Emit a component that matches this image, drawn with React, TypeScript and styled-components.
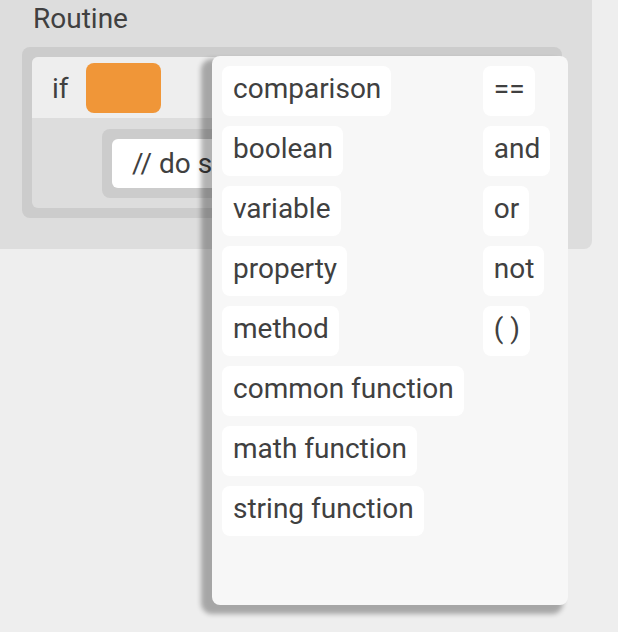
import React from "react";
import styled, { createGlobalStyle } from "styled-components";

const GlobalStyle = createGlobalStyle`
  html, body {
    margin: 0;
    padding: 0;
    background: #eeeeee;
    font-family: Roboto, "Liberation Sans", Arial, sans-serif;
    color: #404040;
  }
  * { box-sizing: border-box; }
`;

const Page = styled.div`
  position: relative;
  width: 618px;
  height: 632px;
  overflow: hidden;
`;

const Panel = styled.div`
  width: 592px;
  background: #dddddd;
  border-bottom-right-radius: 8px;
  padding: 2px 30px 31px 22px;
`;

const Title = styled.div`
  font-size: 28px;
  line-height: 33px;
  padding-left: 11px;
  margin-bottom: 12px;
`;

const Block = styled.div`
  background: #cccccc;
  border-radius: 8px;
  padding: 10px;
`;

const IfBlock = styled.div`
  background: #dddddd;
  border-radius: 6px;
  overflow: hidden;
`;

const IfHeader = styled.div`
  display: flex;
  align-items: center;
  gap: 17px;
  background: #eeeeee;
  padding: 6px 20px 5px;
  font-size: 28px;
  line-height: 33px;
`;

const Slot = styled.div`
  width: 75px;
  height: 50px;
  background: #f09638;
  border-radius: 8px;
`;

const IfBody = styled.div`
  display: flex;
  padding: 11px 0 10px 70px;
`;

const Comment = styled.div`
  background: #ffffff;
  border-radius: 6px;
  padding: 8px 20px;
  font-size: 28px;
  line-height: 33px;
  white-space: nowrap;
`;

const Popup = styled.div`
  position: absolute;
  left: 212px;
  top: 56px;
  width: 356px;
  height: 549px;
  background: #f7f7f7;
  border-radius: 8px;
  box-shadow: -8px 6px 5px 3px rgba(0, 0, 0, 0.3);
  padding: 10px;
  display: flex;
  gap: 19px;
`;

const Column = styled.div`
  display: flex;
  flex-direction: column;
  align-items: flex-start;
  gap: 10px;
`;

const Item = styled.div`
  background: #ffffff;
  border-radius: 8px;
  padding: 6px 10px 10px 11px;
  font-size: 28px;
  line-height: 34px;
  white-space: nowrap;
`;

const categories = [
  "comparison",
  "boolean",
  "variable",
  "property",
  "method",
  "common function",
  "math function",
  "string function",
];

const operators = ["==", "and", "or", "not", "( )"];

export default function App() {
  return (
    <Page>
      <GlobalStyle />
      <Panel>
        <Title>Routine</Title>
        <Block>
          <IfBlock>
            <IfHeader>
              <span>if</span>
              <Slot />
            </IfHeader>
            <IfBody>
              <Block>
                <Comment>// do something</Comment>
              </Block>
            </IfBody>
          </IfBlock>
        </Block>
      </Panel>
      <Popup>
        <Column>
          {categories.map((c) => (
            <Item key={c}>{c}</Item>
          ))}
        </Column>
        <Column>
          {operators.map((o) => (
            <Item key={o}>{o}</Item>
          ))}
        </Column>
      </Popup>
    </Page>
  );
}
